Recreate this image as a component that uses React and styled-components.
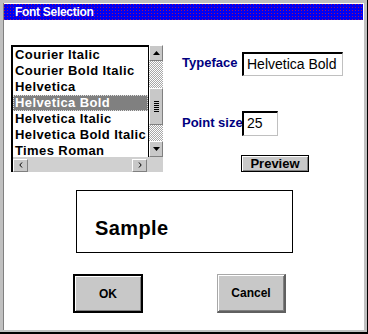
import React from 'react';
import styled, { createGlobalStyle } from "styled-components";

const fontList = [
  "Courier Italic",
  "Courier Bold Italic",
  "Helvetica",
  "Helvetica Bold",
  "Helvetica Italic",
  "Helvetica Bold Italic",
  "Times Roman",
];

const App = () => {
  return (
    <Frame>
      <GlobalStyle />
      <Window>
        <TitleBar>Font Selection</TitleBar>
        <TopRow>
          <ListBox>
            <ListPane>
              {fontList.map((name) => (
                <ListItem key={name} $selected={name === "Helvetica Bold"}>
                  {name}
                </ListItem>
              ))}
            </ListPane>
            <VScroll>
              <ArrowButton>
                <svg width="7" height="4" viewBox="0 0 7 4"><path d="M3.5 0 L7 4 L0 4 Z" fill="#000" /></svg>
              </ArrowButton>
              <Track $grow={27} />
              <Thumb><Grip /></Thumb>
              <Track $grow={16} />
              <ArrowButton>
                <svg width="7" height="4" viewBox="0 0 7 4"><path d="M0 0 L7 0 L3.5 4 Z" fill="#000" /></svg>
              </ArrowButton>
            </VScroll>
            <HScroll>
              <SideButton>
                <svg width="4" height="6" viewBox="0 0 4 6"><path d="M3 0.5 L0.8 3 L3 5.5" stroke="#000" fill="none" /></svg>
              </SideButton>
              <SideButton>
                <svg width="4" height="6" viewBox="0 0 4 6"><path d="M1 0.5 L3.2 3 L1 5.5" stroke="#000" fill="none" /></svg>
              </SideButton>
            </HScroll>
            <Corner />
          </ListBox>
          <Fields>
            <FieldRow $height={24}>
              <Label>Typeface</Label>
              <Input $wide>Helvetica Bold</Input>
            </FieldRow>
            <FieldRow $height={25} $gap={35}>
              <Label>Point size</Label>
              <Input>25</Input>
            </FieldRow>
            <FieldRow $height={17} $gap={19}>
              <Label />
              <PreviewButton>Preview</PreviewButton>
            </FieldRow>
          </Fields>
        </TopRow>
        <SampleBox>Sample</SampleBox>
        <ButtonRow>
          <DialogButton $primary>OK</DialogButton>
          <DialogButton>Cancel</DialogButton>
        </ButtonRow>
      </Window>
    </Frame>
  );
};

const GlobalStyle = createGlobalStyle`
  html, body {
    margin: 0;
    padding: 0;
    background: #fff;
  }
  body {
    font-family: "Liberation Sans", Arial, sans-serif;
  }
`;
const Frame = styled.div`
  width: 368px;
  height: 334px;
  box-sizing: border-box;
  padding: 3px 4px 4px 3px;
  background: #c0c0c0;
  box-shadow: inset -1px -2px 0 #000;
  display: flex;
`;
const Window = styled.div`
  flex: 1;
  background: #fff;
  border-left: 1px solid #808080;
  padding-top: 1px;
  display: flex;
  flex-direction: column;
`;
const TitleBar = styled.div`
  height: 16px;
  margin-right: 1px;
  padding-left: 11px;
  background: conic-gradient(at 1px 1px, #0000f4 0 270deg, #a01060 0) 0 0 / 3px 3px;
  color: #fff;
  font-size: 12px;
  font-weight: 700;
  line-height: 16px;
  letter-spacing: -0.3px;
`;
const TopRow = styled.div`
  display: flex;
  align-items: flex-start;
  padding: 25px 0 0 7px;
`;
const ListBox = styled.div`
  display: grid;
  grid-template-columns: 138px 14px;
  grid-template-rows: 112px 15px;
`;
const ListPane = styled.div`
  box-sizing: border-box;
  border-top: 2px solid #000;
  border-left: 2px solid #000;
  border-right: 1px solid #000;
  overflow: hidden;
  background: #fff;
`;
const ListItem = styled.div`
  height: 16px;
  box-sizing: border-box;
  padding-left: 2px;
  font-size: 13px;
  font-weight: 700;
  letter-spacing: 0.4px;
  line-height: 15px;
  white-space: nowrap;
  color: ${(p) => (p.$selected ? "#fff" : "#000")};
  background: ${(p) => (p.$selected ? "#808080" : "transparent")};
  outline: ${(p) => (p.$selected ? "1px dotted #e0e0e0" : "none")};
  outline-offset: -1px;
`;
const VScroll = styled.div`
  display: flex;
  flex-direction: column;
  background: #c0c0c0;
`;
const ArrowButton = styled.div`
  height: 16px;
  box-sizing: border-box;
  display: flex;
  align-items: center;
  justify-content: center;
  background: #c8c8c8;
  border-top: 1px solid #fff;
  border-left: 1px solid #fff;
  border-right: 1px solid #808080;
  border-bottom: 1px solid #808080;
`;
const Track = styled.div`
  flex: ${(p) => p.$grow} 0 0;
  background: repeating-conic-gradient(#a8a8a8 0 25%, #fff 0 50%) 0 0 / 2px 2px;
`;
const Thumb = styled.div`
  height: 37px;
  box-sizing: border-box;
  display: flex;
  align-items: center;
  justify-content: center;
  background: #c8c8c8;
  border-top: 1px solid #fff;
  border-left: 1px solid #fff;
  border-right: 1px solid #808080;
  border-bottom: 1px solid #808080;
`;
const Grip = styled.div`
  width: 5px;
  height: 11px;
  background: repeating-linear-gradient(#000 0 1px, transparent 1px 2px);
`;
const HScroll = styled.div`
  display: flex;
  justify-content: space-between;
  align-items: center;
  box-sizing: border-box;
  border-left: 2px solid #000;
  padding: 1px 2px 0 0;
  background: #d0d0d0;
`;
const SideButton = styled.div`
  width: 15px;
  height: 13px;
  box-sizing: border-box;
  display: flex;
  align-items: center;
  justify-content: center;
  background: #c8c8c8;
  border-top: 1px solid #fff;
  border-left: 1px solid #fff;
  border-right: 1px solid #808080;
  border-bottom: 1px solid #808080;
`;
const Corner = styled.div`
  background: #d0d0d0;
`;
const Fields = styled.div`
  display: flex;
  flex-direction: column;
  margin: 7px 0 0 19px;
`;
const FieldRow = styled.div`
  display: flex;
  align-items: center;
  height: ${(p) => p.$height}px;
  margin-top: ${(p) => p.$gap || 0}px;
`;
const Label = styled.div`
  width: 60px;
  flex: none;
  color: #000080;
  font-size: 13px;
  font-weight: 700;
  white-space: nowrap;
  margin-top: -3px;
`;
const Input = styled.div`
  position: relative;
  width: ${(p) => (p.$wide ? "101px" : "36px")};
  height: 100%;
  box-sizing: border-box;
  border-top: 2px solid #000;
  border-left: 2px solid #000;
  border-right: 1px solid #c0c0c0;
  border-bottom: 1px solid #c0c0c0;
  background: #fff;
  padding-left: 3px;
  font-size: 14px;
  line-height: 21px;
  color: #000;
  white-space: nowrap;
`;
const PreviewButton = styled.div`
  width: 68px;
  height: 17px;
  box-sizing: border-box;
  margin-left: -1px;
  display: flex;
  align-items: center;
  justify-content: center;
  background: #c8c8c8;
  border: 1px solid #000;
  box-shadow: inset 1px 1px 0 #fff, inset -1px -1px 0 #808080;
  font-size: 13px;
  font-weight: 700;
  line-height: 15px;
`;
const SampleBox = styled.div`
  width: 217px;
  height: 63px;
  box-sizing: border-box;
  margin: 18px 0 0 72px;
  border: 1px solid #000;
  padding: 25px 0 0 18px;
  font-size: 20px;
  font-weight: 700;
  line-height: 24px;
  letter-spacing: 0.4px;
  color: #000;
`;
const ButtonRow = styled.div`
  display: flex;
  gap: 74px;
  margin: 21px 0 0 69px;
`;
const DialogButton = styled.div`
  width: ${(p) => (p.$primary ? "70px" : "69px")};
  height: 39px;
  box-sizing: border-box;
  display: flex;
  align-items: center;
  justify-content: center;
  background: #c8c8c8;
  font-size: 12px;
  font-weight: 700;
  border-style: solid;
  border-color: ${(p) => (p.$primary ? "#000" : "#a8a8a8 #606060 #606060 #a8a8a8")};
  border-width: ${(p) => (p.$primary ? "2px" : "1px 2px 2px 1px")};
  box-shadow: inset 1px 1px 0 #fff, inset -1px -1px 0 #808080;
`;
export default App;
